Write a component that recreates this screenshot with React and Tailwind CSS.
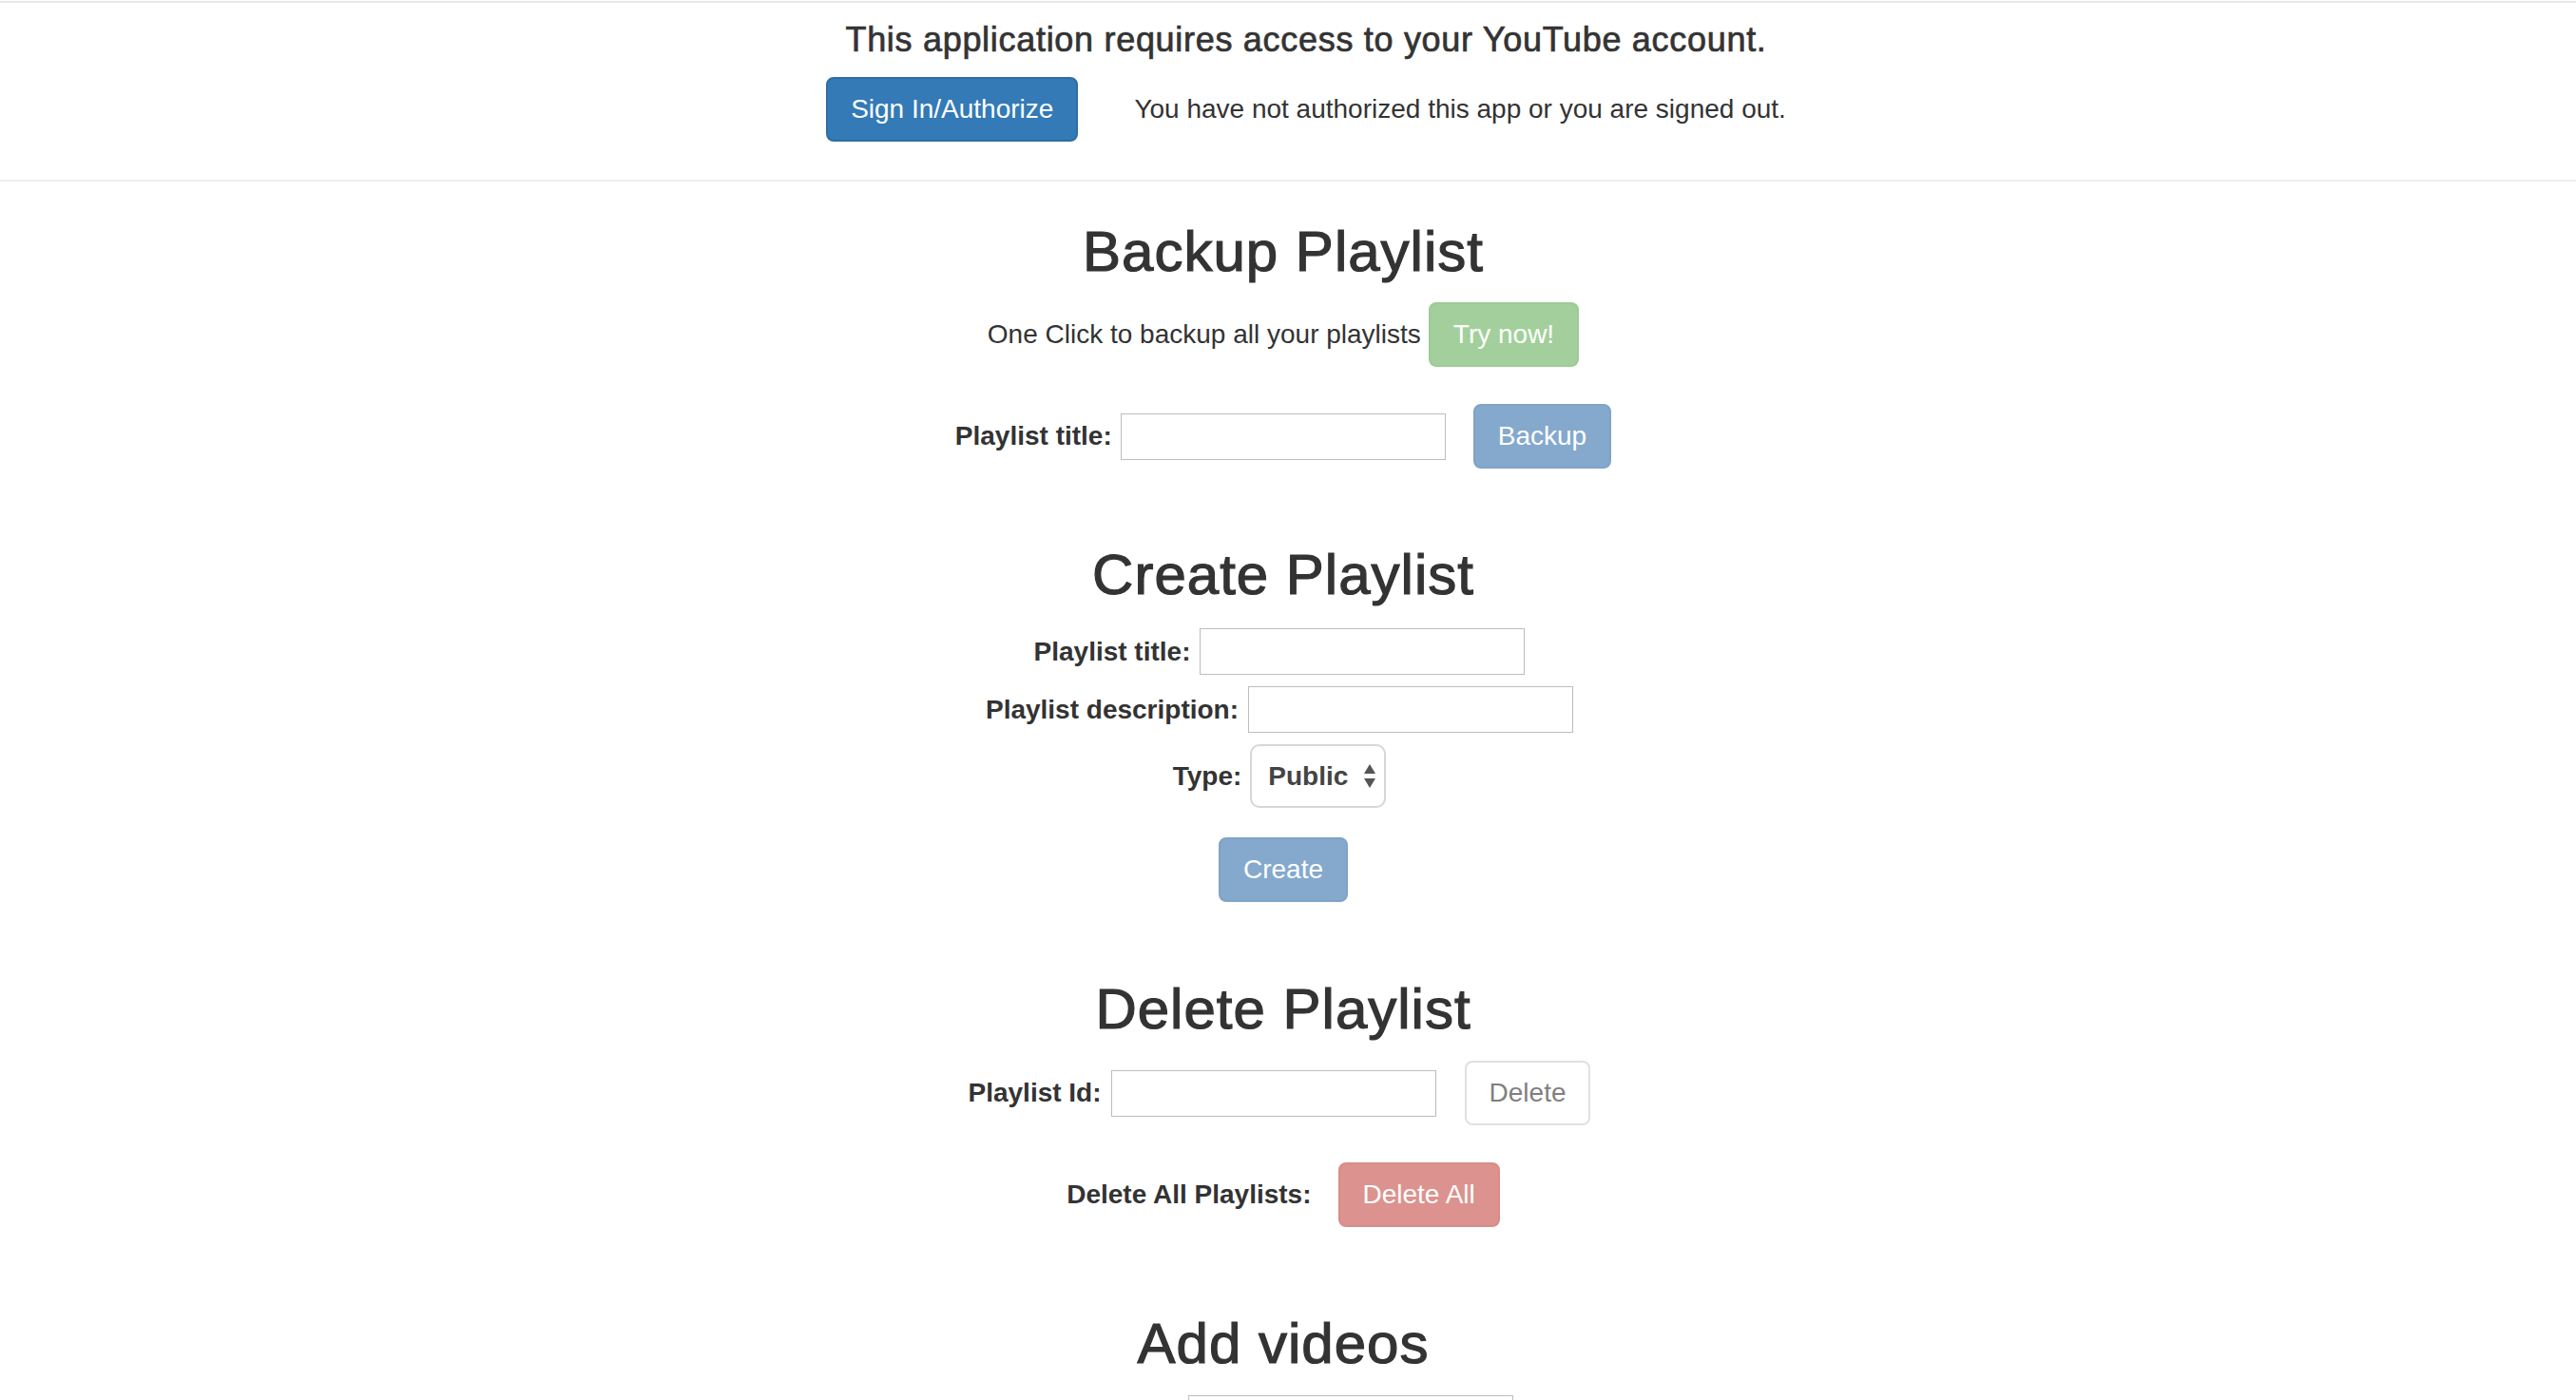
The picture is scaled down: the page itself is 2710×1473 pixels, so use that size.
import { useState } from "react";

const btnBase =
  "h-[68px] px-[24px] border-2 rounded-[8px] text-[28px] leading-[40px] whitespace-nowrap";

const inputCls =
  "h-[49px] w-[342px] border border-[#bdbdbd] bg-white px-[6px] text-[28px] outline-none";

const labelCls = "text-[28px] font-bold whitespace-nowrap";

const Heading = ({ children, className = "" }) => (
  <h2
    className={`text-[60px] leading-[66px] font-medium tracking-[1px] text-[#333] [-webkit-text-stroke:1.2px_#333] ${className}`}
  >
    {children}
  </h2>
);

const SelectArrows = () => (
  <svg width="12" height="26" viewBox="0 0 12 26" className="shrink-0">
    <polygon points="6,0 12,10 0,10" fill="#555" />
    <polygon points="0,15 12,15 6,25" fill="#555" />
  </svg>
);

export default function App() {
  const [type, setType] = useState("public");

  return (
    <div className="h-[1473px] overflow-hidden bg-white font-['Liberation_Sans',Arial,sans-serif] text-[#333]">
      {/* top border */}
      <div className="mt-[1px] h-[2px] bg-[#e8e8e8]"></div>

      {/* === AUTH HEADER === */}
      <div className="pl-[38px] flex flex-col items-center">
        <h4 className="mt-[19px] text-[36px] leading-[40px] font-medium tracking-[0.7px] [-webkit-text-stroke:0.7px_#333]">
          This application requires access to your YouTube account.
        </h4>
        <div className="mt-[19px] flex items-center">
          <button className={`${btnBase} bg-[#337ab7] border-[#2e6da4] text-white`}>
            Sign In/Authorize
          </button>
          <span className="ml-[59px] text-[28px] leading-[40px]">
            You have not authorized this app or you are signed out.
          </span>
        </div>
      </div>

      <hr className="mt-[40px] border-0 border-t-2 border-[#eee]" />

      <div className="pr-[10px] flex flex-col items-center">
        {/* === BACKUP === */}
        <Heading className="mt-[41px]">Backup Playlist</Heading>
        <div className="mt-[20px] flex items-baseline gap-[8px]">
          <span className="text-[28px] leading-[40px]">One Click to backup all your playlists</span>
          <button className={`${btnBase} bg-[#a2cf9b] border-[#9ccb95] text-white`}>Try now!</button>
        </div>
        <div className="mt-[39px] flex items-center">
          <label className={labelCls}>Playlist title:</label>
          <input className={`${inputCls} ml-[9px]`} />
          <button className={`${btnBase} ml-[29px] bg-[#84a9cd] border-[#7ea3c8] text-white`}>Backup</button>
        </div>

        {/* === CREATE === */}
        <Heading className="mt-[79px]">Create Playlist</Heading>
        <div className="mt-[23px] mr-[8px] flex items-center">
          <label className={labelCls}>Playlist title:</label>
          <input className={`${inputCls} ml-[10px]`} />
        </div>
        <div className="mt-[12px] mr-[8px] flex items-center">
          <label className={labelCls}>Playlist description:</label>
          <input className={`${inputCls} ml-[10px]`} />
        </div>
        <div className="mt-[12px] mr-[8px] flex items-center">
          <label className={labelCls}>Type:</label>
          <div className="ml-[9px] flex items-center h-[67px] w-[143px] border-2 border-[#d6d6d6] rounded-[10px] bg-white pl-[17px] pr-[9px]">
            <select
              value={type}
              onChange={(e) => setType(e.target.value)}
              className="flex-1 min-w-0 appearance-none bg-transparent outline-none text-[28px] font-bold text-[#444]"
            >
              <option value="public">Public</option>
              <option value="private">Private</option>
              <option value="unlisted">Unlisted</option>
            </select>
            <SelectArrows />
          </div>
        </div>
        <button className={`${btnBase} mt-[31px] bg-[#84a9cd] border-[#7ea3c8] text-white`}>Create</button>

        {/* === DELETE === */}
        <Heading className="mt-[80px]">Delete Playlist</Heading>
        <div className="mt-[21px] mr-[8px] flex items-center">
          <label className={labelCls}>Playlist Id:</label>
          <input className={`${inputCls} ml-[10px]`} />
          <button className={`${btnBase} ml-[30px] bg-white border-[#e0e0e0] text-[#7f7f7f]`}>Delete</button>
        </div>
        <div className="mt-[39px] flex items-center">
          <label className={labelCls}>Delete All Playlists:</label>
          <button className={`${btnBase} ml-[28px] bg-[#dc928e] border-[#d88c88] text-white`}>Delete All</button>
        </div>

        {/* === ADD VIDEOS === */}
        <Heading className="mt-[90px]">Add videos</Heading>
        <div className="mt-[21px] mr-[8px] flex items-center">
          <label className={labelCls}>Playlist Id:</label>
          <input className={`${inputCls} ml-[10px]`} />
        </div>
      </div>
    </div>
  );
}
